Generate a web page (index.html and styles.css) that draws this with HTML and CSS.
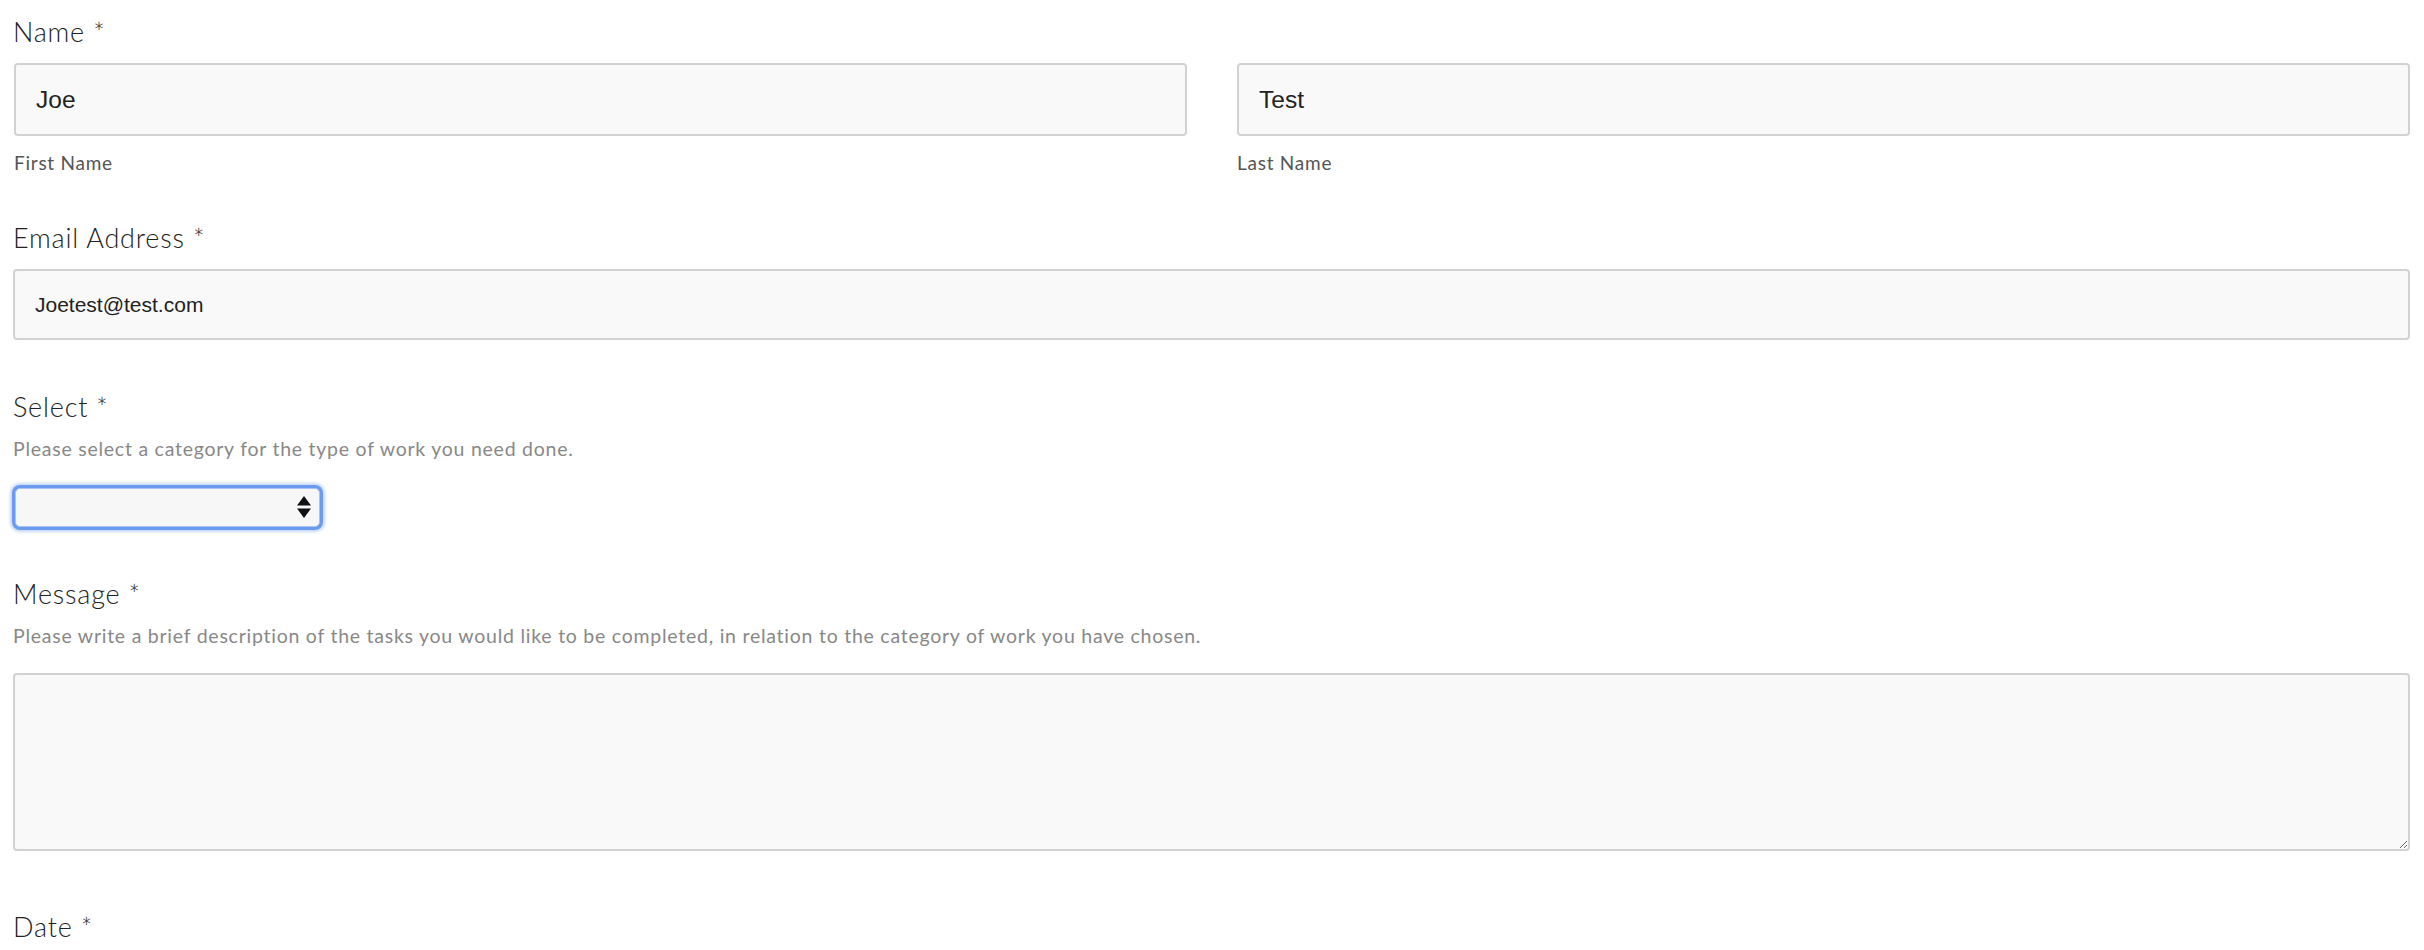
FILE: index.html
```html
<!DOCTYPE html>
<html lang="en">
<head>
  <meta charset="UTF-8" />
  <title>Contact Form</title>
  <link rel="stylesheet" href="styles.css">
</head>
<body>
  <form class="form">

    <div class="field">
      <div class="label">Name *</div>
      <div class="nameRow">
        <div class="namePart">
          <input class="textInput big" type="text" value="Joe">
          <div class="subLabel">First Name</div>
        </div>
        <div class="namePart">
          <input class="textInput big" type="text" value="Test">
          <div class="subLabel">Last Name</div>
        </div>
      </div>
    </div>

    <div class="field email">
      <div class="label">Email Address *</div>
      <input class="textInput small" type="email" value="Joetest@test.com">
    </div>

    <div class="field select">
      <div class="label">Select *</div>
      <div class="help">Please select a category for the type of work you need done.</div>
      <div class="selectWrap">
        <select class="selectBox focused">
          <option></option>
        </select>
        <svg class="arrows" width="16" height="26" viewBox="0 0 16 26">
          <path d="M8 2 L15 11.5 L1 11.5 Z" fill="#111"/>
          <path d="M1 14.5 L15 14.5 L8 24 Z" fill="#111"/>
        </svg>
      </div>
    </div>

    <div class="field message">
      <div class="label">Message *</div>
      <div class="help">Please write a brief description of the tasks you would like to be completed, in relation to the category of work you have chosen.</div>
      <textarea class="textArea"></textarea>
    </div>

    <div class="field">
      <div class="label">Date *</div>
    </div>

  </form>
</body>
</html>
```

FILE: styles.css
```css
body {
  margin: 0;
  background: #fff;
  font-family: Lato, 'Open Sans', sans-serif;
  color: #333;
}

.form {
  padding: 16px 14px 0 13px;
}

.field {
  margin-bottom: 48px;
}

.field.email {
  margin-bottom: 51px;
}

.field.select {
  margin-bottom: 51px;
}

.field.message {
  margin-bottom: 60px;
}

.label {
  font-size: 27px;
  font-weight: 300;
  letter-spacing: 0.8px;
  line-height: 32px;
  color: #222;
  margin-bottom: 15px;
}

.help {
  font-size: 19.5px;
  letter-spacing: 0.75px;
  line-height: 22px;
  color: #888;
}

.select .help {
  margin-bottom: 28px;
}

.message .help {
  margin-bottom: 26px;
}

.nameRow {
  display: grid;
  grid-template-columns: 1fr 1fr;
  gap: 50px;
  padding-left: 1px;
}

.textInput {
  display: block;
  box-sizing: border-box;
  width: 100%;
  margin: 0;
  background: #f9f9f9;
  border: 2px solid #d2d2d2;
  border-radius: 4px;
  padding: 0 20px;
  font-family: 'Liberation Sans', Arial, sans-serif;
  color: #222;
  outline: none;
}

.textInput.big {
  height: 73px;
  font-size: 24.5px;
}

.textInput.small {
  height: 71px;
  font-size: 21px;
}

.subLabel {
  margin-top: 16px;
  font-size: 19px;
  letter-spacing: 0.75px;
  line-height: 22px;
  color: #555;
}

.selectWrap {
  position: relative;
  width: 305px;
  margin-left: 2px;
}

.selectBox {
  display: block;
  appearance: none;
  -webkit-appearance: none;
  box-sizing: border-box;
  width: 100%;
  height: 39px;
  margin: 0;
  background: #f7f7f7;
  border: 1px solid #a8c3f3;
  border-radius: 5px;
  font-size: 18px;
}

.selectBox.focused {
  box-shadow: 0 0 0 3px #6b9bef, 0 0 3px 5px rgba(107, 155, 239, 0.4);
}

.arrows {
  position: absolute;
  right: 8px;
  top: 6px;
}

.textArea {
  display: block;
  box-sizing: border-box;
  width: 100%;
  height: 178px;
  background: #f9f9f9;
  border: 2px solid #d2d2d2;
  border-radius: 4px;
  resize: both;
  outline: none;
}
```
